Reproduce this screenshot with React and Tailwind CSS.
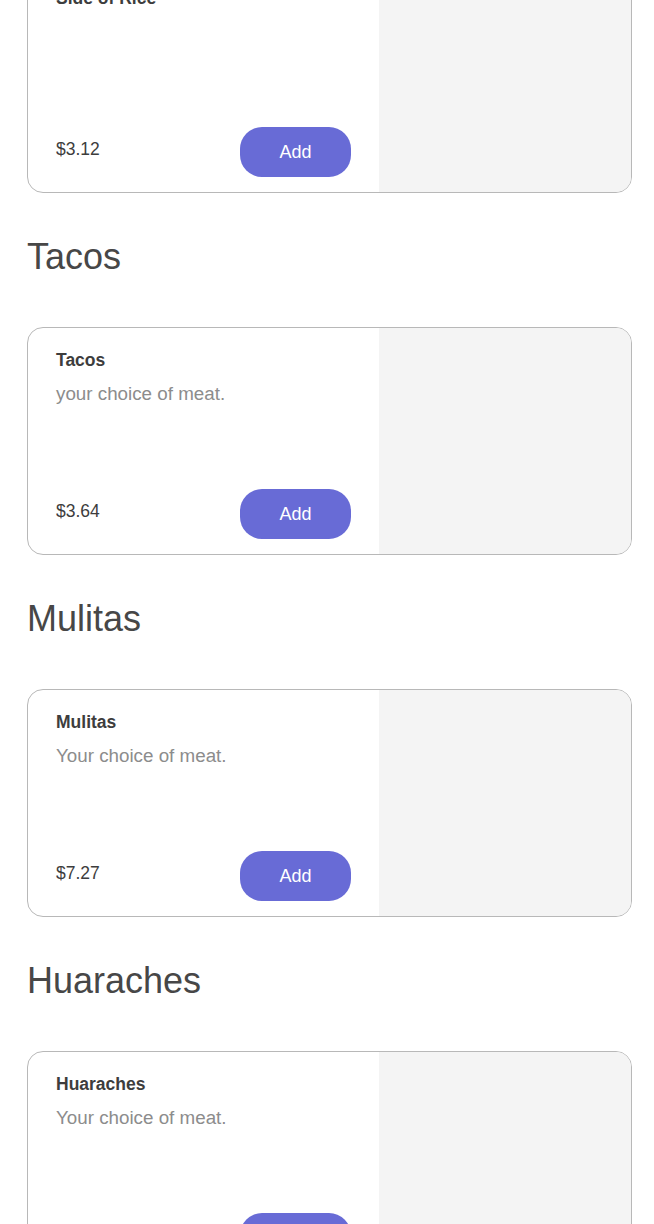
import React from 'react';

const sections = [
  { heading: null, name: 'Side of Rice', desc: '', price: '$3.12' },
  { heading: 'Tacos', name: 'Tacos', desc: 'your choice of meat.', price: '$3.64' },
  { heading: 'Mulitas', name: 'Mulitas', desc: 'Your choice of meat.', price: '$7.27' },
  { heading: 'Huaraches', name: 'Huaraches', desc: 'Your choice of meat.', price: '$8.30' },
];

const ItemCard = ({ name, desc, price }) => (
  <div className="flex h-[228px] overflow-hidden rounded-[16px] border border-[#b8b8b8] bg-white">
    <div className="flex w-[351px] shrink-0 flex-col px-[28px] pt-[20px] pb-[15px]">
      <div className="text-[17.5px] leading-[24px] font-bold text-[#3d3d3d]">{name}</div>
      <div className="mt-[10px] text-[18.8px] leading-[24px] text-[#8c8c8c]">{desc}</div>
      <div className="flex-1" />
      <div className="flex items-center justify-between">
        <span className="pb-[6px] text-[17.5px] leading-[24px] text-[#3d3d3d]">{price}</span>
        <button className="h-[50px] w-[111px] rounded-[22px] bg-[#686bd6] text-[18px] text-white">
          Add
        </button>
      </div>
    </div>
    <div className="flex-1 bg-[#f4f4f4]" />
  </div>
);

export default function App() {
  return (
    <div
      className="min-h-screen bg-white"
      style={{ fontFamily: '"Liberation Sans", Arial, sans-serif' }}
    >
      <div className="-mt-[35px] pl-[27px] pr-[22px]">
        {sections.map((s, i) => (
          <div key={i}>
            {s.heading && (
              <h2 className="mt-[42px] mb-[48px] text-[36px] leading-[44px] text-[#474747]">
                {s.heading}
              </h2>
            )}
            <ItemCard name={s.name} desc={s.desc} price={s.price} />
          </div>
        ))}
      </div>
    </div>
  );
}
